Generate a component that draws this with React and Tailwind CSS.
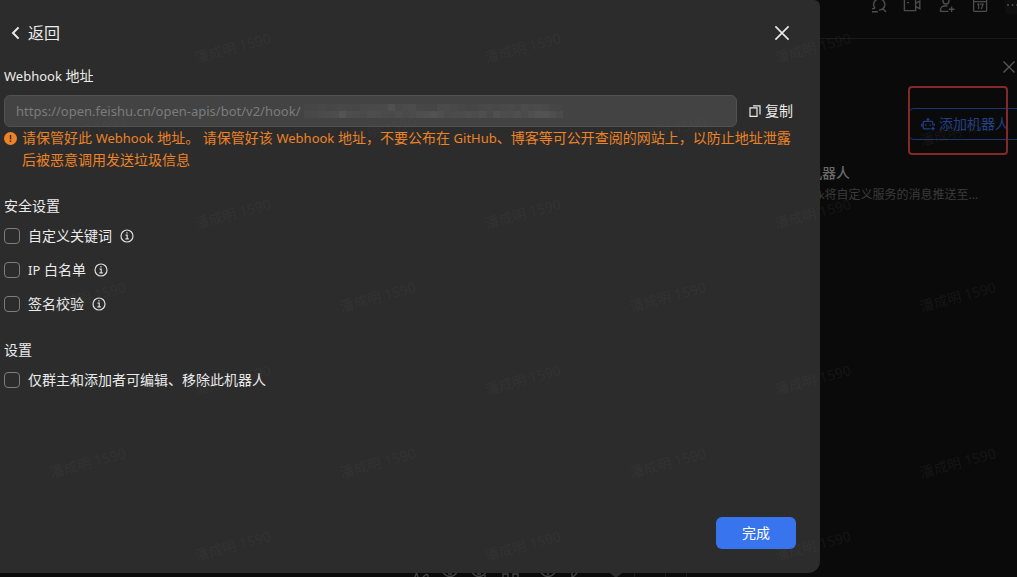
import { useState } from 'react';

const opcionesSeguridad = [
  { id: 'keyword', texto: '自定义关键词' },
  { id: 'ip', latin: 'IP', texto: '白名单' },
  { id: 'sign', texto: '签名校验' }
];

// grises de cada bloque del pixelado, dos filas
const mosaico = [
  [70, 70, 72, 70, 71, 72, 71, 70, 73, 73, 74, 74, 80, 73, 75, 76, 71, 70, 69, 74, 75, 73, 71, 69, 70, 72, 73, 71, 73, 74, 72, 76, 74, 75, 73, 70, 69],
  [72, 73, 75, 76, 77, 84, 77, 76, 74, 78, 77, 75, 74, 77, 74, 76, 78, 79, 82, 79, 74, 75, 76, 78, 76, 79, 74, 80, 77, 76, 79, 75, 79, 83, 82, 79, 74]
];

function Latin({ children }) {
  return <span className="text-[13px]">{children}</span>;
}

function IconoInfo() {
  return (
    <svg className="size-[14px] shrink-0" viewBox="0 0 14 14" fill="none" stroke="#dedede" strokeWidth="1.2">
      <circle cx="7" cy="7" r="6" />
      <path d="M5.6 6.2H7.2V9.8M5.4 9.9H8.8" />
      <path d="M6.3 3.9H7.6" strokeWidth="1.4" />
    </svg>
  );
}

function Casilla({ id, latin, texto, info, checked, onChange }) {
  return (
    <div className="flex items-center gap-2 h-[22px]">
      <input id={id} type="checkbox" checked={checked} onChange={onChange} className="appearance-none size-4 shrink-0 rounded border border-[#7c7c7c] checked:bg-[#3370eb]" />
      <label htmlFor={id}>{latin && <><Latin>{latin}</Latin> </>}{texto}</label>
      {info && <button aria-label="说明"><IconoInfo /></button>}
    </div>
  );
}

function MarcaDeAgua() {
  return (
    <div aria-hidden="true" className="absolute inset-0 overflow-hidden pointer-events-none select-none pt-[6px] text-sm text-[#606060]/15">
      {[0, 1, 2, 3, 4, 5, 6].map(fila => (
        <div key={fila} className={`flex h-[83px] ${fila % 2 === 0 ? 'ml-[88px]' : '-ml-[57px]'}`}>
          {(fila % 2 === 0 ? [0, 1, 2] : [0, 1, 2, 3]).map(col => (
            <div key={col} className="w-[290px] shrink-0 flex items-center justify-center"><span className="-rotate-15 whitespace-nowrap">潘成明 1590</span></div>
          ))}
        </div>
      ))}
    </div>
  );
}

function BarraSuperior() {
  return (
    <header className="flex justify-end h-[39px] border-b border-[#191919] text-[#4c4c4c]">
      <div className="flex items-start gap-4 -mt-1">
        <button aria-label="搜索">
          <svg className="size-[18px]" viewBox="0 0 18 18" fill="none" stroke="currentColor" strokeWidth="1.4">
            <path d="M6.2 12.4A5.6 5.6 0 1 1 10 14.1M13.8 12.6L17 16M3 12.6H5.4M3 15.8H9" />
          </svg>
        </button>
        <button aria-label="视频会议">
          <svg className="size-[18px]" viewBox="0 0 18 18" fill="none" stroke="currentColor" strokeWidth="1.4">
            <path d="M1.4 2.4H12.6V14.6H1.4ZM12.6 7.4L16.8 5V12.8L12.6 10.4M4 6.6H6.2" />
          </svg>
        </button>
        <button aria-label="添加成员">
          <svg className="size-[18px]" viewBox="0 0 18 18" fill="none" stroke="currentColor" strokeWidth="1.4">
            <circle cx="9" cy="5" r="3" />
            <path d="M10.4 10H7.5A4 4 0 0 0 3.5 14V15.4H11.4M14.6 10.4V16M11.8 13.2H17.5" />
          </svg>
        </button>
        <button aria-label="日历">
          <svg className="size-[18px]" viewBox="0 0 18 18" fill="none" stroke="currentColor" strokeWidth="1.3">
            <rect x="2.6" y="2" width="13" height="13.4" rx="1" />
            <path d="M2.6 5.6H15.6" />
            <path d="M6.4 8.6L7.6 7.9V13M9.2 8.2H12L10.4 13" />
          </svg>
        </button>
        <button aria-label="更多" className="-mr-2 rounded bg-[#0f0f0f]">
          <svg className="w-5 h-[18px]" viewBox="0 0 20 18" fill="currentColor">
            <circle cx="3" cy="9" r="1" /><circle cx="7.6" cy="9" r="1" /><circle cx="12.2" cy="9" r="1" />
          </svg>
        </button>
      </div>
    </header>
  );
}

function PanelBots() {
  return (
    <aside className="ml-auto w-[209px] overflow-hidden text-[#686868]">
      <div className="flex justify-end pt-[21px] pr-[1px]">
        <button aria-label="关闭面板">
          <svg className="size-[14px]" viewBox="0 0 14 14" fill="none" stroke="#5a5a5a" strokeWidth="1.2"><path d="M1.5 1.5L12.5 12.5M12.5 1.5L1.5 12.5" /></svg>
        </button>
      </div>
      <div className="relative ml-[100px] mt-[34px]">
        <button className="flex items-center gap-1 w-[124px] h-8 pl-3 rounded-md border border-[#1b3673] text-[#213f85] whitespace-nowrap">
          <svg className="size-[14px] shrink-0" viewBox="0 0 14 14" fill="none" stroke="currentColor" strokeWidth="1.3">
            <path d="M9.5 11.8H3.4A1.2 1.2 0 0 1 2.2 10.6V5.6A1.2 1.2 0 0 1 3.4 4.4H10.6A1.2 1.2 0 0 1 11.8 5.6V8.6M7 4.4V1M5.6 2.4H8.4M.6 6.8V9.4M13.4 6.8V8.4M4.8 7.2V8.8M9.2 7.2V8.8M12 9.8V13.4M10.2 11.6H13.8" />
          </svg>
          添加机器人
        </button>
        <div className="absolute left-0 -top-[22px] w-[100px] h-[69px] rounded border-2 border-[#84292b]" />
      </div>
      <div className="mt-[22px]">
        <h3 className="text-sm leading-[22px] font-medium">机器人</h3>
        <p className="pl-1 text-xs leading-[22px] text-[#3a3a3a] whitespace-nowrap"><span className="text-[11px]">ok</span>将自定义服务的消息推送至...</p>
      </div>
    </aside>
  );
}

// solo asoma el borde superior de los iconos del editor
function BarraEditor() {
  return (
    <footer className="h-1 overflow-hidden pl-[410px] text-[#424242]">
      <svg className="w-[290px] h-4" viewBox="0 0 290 16" fill="none" stroke="currentColor" strokeWidth="1.4">
        <path d="M2 12L6.5 0L11 12M13 4Q18 -1 18 4V12" />
        <circle cx="40" cy="-4" r="7.5" /><path d="M38 1H42" />
        <circle cx="69" cy="-4" r="7.5" /><path d="M67 1H71M74 3H76" />
        <path d="M93 12V1H98V12M103 12V1H108V12" />
        <circle cx="138" cy="-4" r="7.5" /><path d="M138 0V2" />
        <path d="M162 0V6M162 5L167 0" />
        <path d="M200 0H212L206 5Z" fill="#2c2c2c" stroke="none" />
        <path d="M224.5 0V16M255.5 0V16M276.5 0V16" stroke="#1c1c1c" strokeWidth="1" />
      </svg>
    </footer>
  );
}

export default function App() {
  const [marcadas, setMarcadas] = useState({});
  const alternar = (id) => setMarcadas(prev => ({ ...prev, [id]: !prev[id] }));

  return (
    <div className="relative flex flex-col min-h-screen overflow-hidden bg-[#0a0a0a] text-sm leading-[22px] font-['Noto_Sans','Noto_Sans_CJK_SC',sans-serif]">
      <BarraSuperior />
      <main className="flex flex-1"><PanelBots /></main>
      <BarraEditor />

      <div className="absolute inset-0 flex pr-[197px] pb-1">
        <section role="dialog" aria-label="Webhook" className="flex flex-col flex-1 min-w-0 pt-4 pr-6 pb-6 pl-1 rounded-r-xl rounded-tr-md bg-[#2c2c2c] text-[#ebebeb]">
          <div className="flex items-center justify-between h-[34px]">
            <button className="flex items-center gap-2 pl-1 text-base">
              <svg className="w-3 h-4" viewBox="0 0 12 16" fill="none" stroke="currentColor" strokeWidth="2"><path d="M10.6 2.4L5 8L10.6 13.6" /></svg>
              返回
            </button>
            <button aria-label="关闭" className="flex items-center justify-center size-7">
              <svg className="size-4" viewBox="0 0 16 16" fill="none" stroke="currentColor" strokeWidth="1.6"><path d="M1.4 1.4L14.6 14.6M14.6 1.4L1.4 14.6" /></svg>
            </button>
          </div>

          <label htmlFor="webhook" className="mt-[15px] mb-2"><Latin>Webhook</Latin> 地址</label>
          <div className="flex items-center">
            <div className="relative flex-1 h-8">
              <input id="webhook" type="text" readOnly value="https://open.feishu.cn/open-apis/bot/v2/hook/" className="w-full h-8 px-[11px] rounded-md border border-[#515151] bg-[#434343] text-[13px] text-[#7c7c7c] outline-none" />
              <svg aria-hidden="true" className="absolute left-[300px] top-[9px] w-[259px] h-[14px]" viewBox="0 0 259 14" shapeRendering="crispEdges">
                {mosaico.map((fila, y) => fila.map((g, x) => <rect key={`${y}-${x}`} x={x * 7} y={y * 7} width="7" height="7" fill={`rgb(${g},${g},${g})`} />))}
              </svg>
            </div>
            <button className="flex items-center gap-1 w-[59px] pl-3 whitespace-nowrap">
              <svg className="size-3 shrink-0" viewBox="0 0 12 12" fill="none" stroke="currentColor" strokeWidth="1.2"><path d="M1 2.8H8V11.4H1ZM4 .8H11V9.4" /></svg>
              复制
            </button>
          </div>
          <div className="flex gap-[5px] text-[#ed8326]">
            <svg className="size-[13px] shrink-0 mt-[5px]" viewBox="0 0 13 13"><circle cx="6.5" cy="6.5" r="6.5" fill="currentColor" /><path d="M6.5 3V7.4M6.5 8.6V10" stroke="#2c2c2c" strokeWidth="1.4" /></svg>
            <p>请保管好此 <Latin>Webhook</Latin> 地址。 请保管好该 <Latin>Webhook</Latin> 地址，不要公布在 <Latin>GitHub</Latin>、博客等可公开查阅的网站上，以防止地址泄露后被恶意调用发送垃圾信息</p>
          </div>

          <h2 className="mt-6">安全设置</h2>
          <div className="flex flex-col gap-3 mt-2">
            {opcionesSeguridad.map(op => <Casilla key={op.id} {...op} info checked={!!marcadas[op.id]} onChange={() => alternar(op.id)} />)}
          </div>

          <h2 className="mt-6 mb-2">设置</h2>
          <Casilla id="owner" texto="仅群主和添加者可编辑、移除此机器人" checked={!!marcadas.owner} onChange={() => alternar('owner')} />

          <button className="self-end mt-auto w-20 h-8 rounded-md bg-[#3774ed] text-white">完成</button>
        </section>
      </div>
      <MarcaDeAgua />
    </div>
  );
}
